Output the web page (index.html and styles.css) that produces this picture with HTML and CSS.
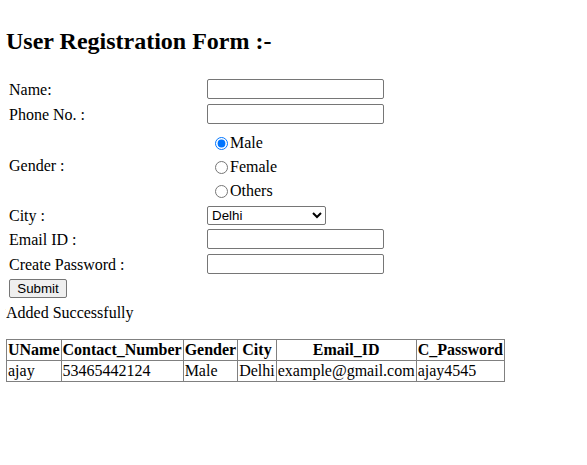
FILE: index.html
```html
<!DOCTYPE html>
<html>
<head>
<meta charset="utf-8">
<title>User Registration</title>
<link rel="stylesheet" href="styles.css">
</head>
<body>
<h2 class="title">User Registration Form :-</h2>
<form class="reg-form">
<table class="form-table">
<tr><td class="label">Name:</td><td><input type="text" class="field"></td></tr>
<tr><td class="label">Phone No. :</td><td><input type="text" class="field"></td></tr>
<tr><td class="label">Gender :</td><td class="radios">
<label class="opt"><input type="radio" name="g" checked>Male</label>
<label class="opt"><input type="radio" name="g">Female</label>
<label class="opt"><input type="radio" name="g">Others</label>
</td></tr>
<tr><td class="label">City :</td><td><select class="city"><option>Delhi</option></select></td></tr>
<tr><td class="label">Email ID :</td><td><input type="text" class="field"></td></tr>
<tr><td class="label">Create Password :</td><td><input type="password" class="field"></td></tr>
<tr><td class="label"><button type="button" class="submit">Submit</button></td><td></td></tr>
</table>
</form>
<div class="msg">Added Successfully</div>
<table class="data">
<tr><th>UName</th><th>Contact_Number</th><th>Gender</th><th>City</th><th>Email_ID</th><th>C_Password</th></tr>
<tr><td>ajay</td><td>53465442124</td><td>Male</td><td>Delhi</td><td>example@gmail.com</td><td>ajay4545</td></tr>
</table>
</body>
</html>
```
FILE: styles.css
```css
body {
  margin: 8px 6px;
  font-family: "Liberation Serif", "Times New Roman", serif;
  font-size: 16px;
  color: #000;
  background: #fff;
}
.title {
  font-size: 24px;
  font-weight: bold;
  margin: 20px 0 21px;
}
.reg-form { margin: 0; }
.form-table {
  border-spacing: 2px;
  margin: 0;
}
.form-table td {
  padding: 1px;
  vertical-align: middle;
}
.form-table .label { width: 194px; padding-left: 1px; }
.field {
  display: block;
  box-sizing: border-box;
  width: 177px;
  height: 20px;
  margin: 0 0 1px;
  border: 1px solid #767676;
  border-radius: 2px;
  padding: 1px 2px;
}
.form-table td.radios { display: flex; flex-direction: column; padding: 3px 1px 0; }
.opt { display: flex; align-items: center; height: 24px; }
.opt input { margin: 0 2px 0 8px; width: 13px; height: 13px; }
.city {
  display: block;
  box-sizing: border-box;
  width: 119px;
  height: 19px;
  margin: 0;
  font-family: "Liberation Sans", Arial, sans-serif;
  font-size: 13.33px;
  border: 1px solid #767676;
  border-radius: 2px;
  background: #fff;
}
.submit {
  display: block;
  box-sizing: border-box;
  width: 58px;
  height: 19px;
  margin: 0 0 1px;
  font-family: "Liberation Sans", Arial, sans-serif;
  font-size: 13.33px;
  border: 1px solid #767676;
  border-radius: 2px;
  background: #efefef;
  padding: 0 6px;
}
.msg { margin: 0 0 17px; padding-top: 2px; }
.data {
  border-collapse: collapse;
  border: 1px solid #808080;
}
.data th, .data td {
  border: 1px solid #808080;
  padding: 1px 1px 1px;
  text-align: left;
  font-size: 16px;
}
.data th { text-align: center; font-weight: bold; }
.data td { text-align: left; }
```
